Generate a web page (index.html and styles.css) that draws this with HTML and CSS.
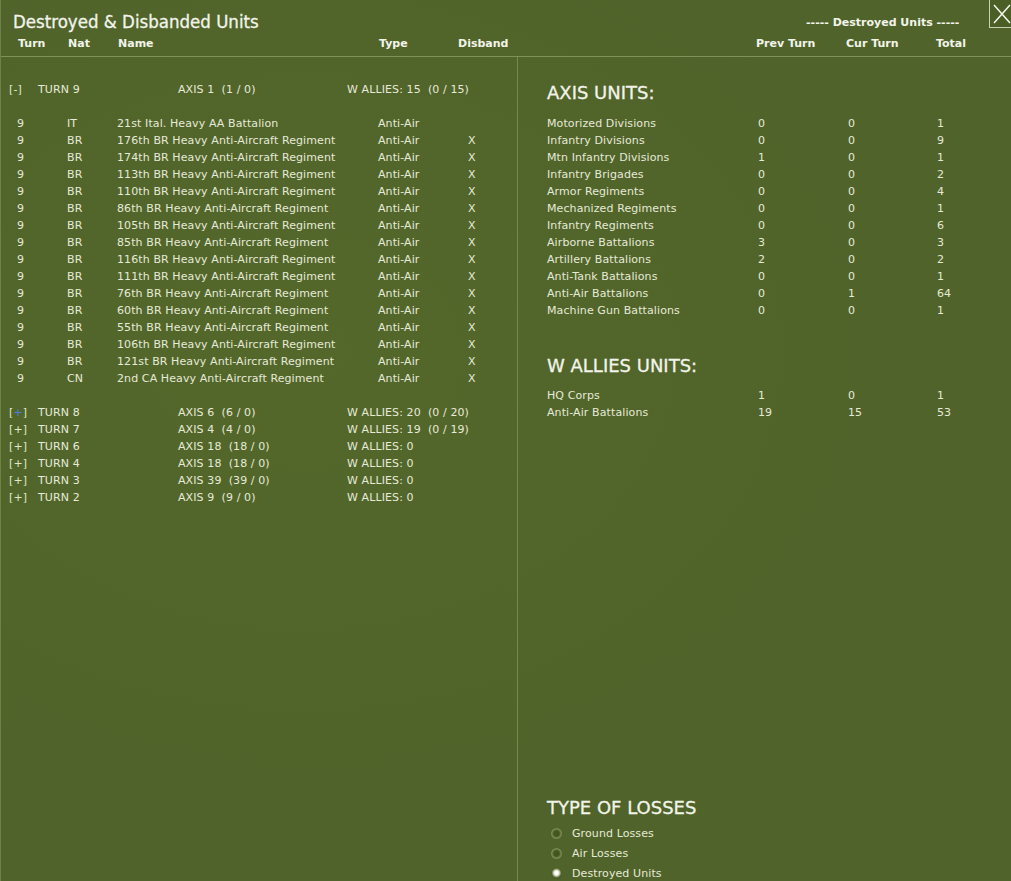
FILE: index.html
```html
<!DOCTYPE html>
<html lang="en">
<head>
    <meta charset="UTF-8">
    <title>Destroyed &amp; Disbanded Units</title>
    <link rel="stylesheet" href="styles.css">
</head>
<body>
    <div class="window">
        <!-- Title bar with column captions -->
        <div class="header">
            <div class="header-left">
                <h1 class="title">Destroyed &amp; Disbanded Units</h1>
                <div class="unit-row col-heads">
                    <span>Turn</span><span>Nat</span><span>Name</span><span class="head-type">Type</span><span class="head-disband">Disband</span>
                </div>
            </div>
            <div class="header-right">
                <div class="caption">----- Destroyed Units -----</div>
                <div class="stat-row col-heads">
                    <span></span><span>Prev Turn</span><span>Cur Turn</span><span>Total</span>
                </div>
            </div>
            <button class="close-btn" title="Close">
                <svg width="18" height="20" viewBox="0 0 18 20"><path d="M1 1 L17 19 M17 1 L1 19" stroke="#f4f6ee" stroke-width="1.5" fill="none"/></svg>
            </button>
        </div>

        <div class="content">
            <!-- Unit list by turn -->
            <div class="list-panel">
                <div class="turn-row">
                    <span class="toggle">[-]</span><span>TURN 9</span><span>AXIS 1&nbsp; (1 / 0)</span><span>W ALLIES: 15&nbsp; (0 / 15)</span>
                </div>
                <div class="units" id="units"></div>
                <div class="turns">
                    <div class="turn-row"><span class="toggle">[<b class="focus">+</b>]</span><span>TURN 8</span><span>AXIS 6&nbsp; (6 / 0)</span><span>W ALLIES: 20&nbsp; (0 / 20)</span></div>
                    <div class="turn-row"><span class="toggle">[+]</span><span>TURN 7</span><span>AXIS 4&nbsp; (4 / 0)</span><span>W ALLIES: 19&nbsp; (0 / 19)</span></div>
                    <div class="turn-row"><span class="toggle">[+]</span><span>TURN 6</span><span>AXIS 18&nbsp; (18 / 0)</span><span>W ALLIES: 0</span></div>
                    <div class="turn-row"><span class="toggle">[+]</span><span>TURN 4</span><span>AXIS 18&nbsp; (18 / 0)</span><span>W ALLIES: 0</span></div>
                    <div class="turn-row"><span class="toggle">[+]</span><span>TURN 3</span><span>AXIS 39&nbsp; (39 / 0)</span><span>W ALLIES: 0</span></div>
                    <div class="turn-row"><span class="toggle">[+]</span><span>TURN 2</span><span>AXIS 9&nbsp; (9 / 0)</span><span>W ALLIES: 0</span></div>
                </div>
            </div>

            <!-- Summary by unit class -->
            <div class="summary-panel">
                <h2 class="side-title">AXIS UNITS:</h2>
                <div id="axisStats"></div>
                <h2 class="side-title allies-title">W ALLIES UNITS:</h2>
                <div id="alliesStats"></div>

                <div class="losses">
                    <h2 class="side-title">TYPE OF LOSSES</h2>
                    <label class="radio"><span class="dot"></span>Ground Losses</label>
                    <label class="radio"><span class="dot"></span>Air Losses</label>
                    <label class="radio"><span class="dot checked"></span>Destroyed Units</label>
                </div>
            </div>
        </div>
    </div>

    <script>
        var units = [
            ['9', 'IT', '21st Ital. Heavy AA Battalion', 'Anti-Air', ''],
            ['9', 'BR', '176th BR Heavy Anti-Aircraft Regiment', 'Anti-Air', 'X'],
            ['9', 'BR', '174th BR Heavy Anti-Aircraft Regiment', 'Anti-Air', 'X'],
            ['9', 'BR', '113th BR Heavy Anti-Aircraft Regiment', 'Anti-Air', 'X'],
            ['9', 'BR', '110th BR Heavy Anti-Aircraft Regiment', 'Anti-Air', 'X'],
            ['9', 'BR', '86th BR Heavy Anti-Aircraft Regiment', 'Anti-Air', 'X'],
            ['9', 'BR', '105th BR Heavy Anti-Aircraft Regiment', 'Anti-Air', 'X'],
            ['9', 'BR', '85th BR Heavy Anti-Aircraft Regiment', 'Anti-Air', 'X'],
            ['9', 'BR', '116th BR Heavy Anti-Aircraft Regiment', 'Anti-Air', 'X'],
            ['9', 'BR', '111th BR Heavy Anti-Aircraft Regiment', 'Anti-Air', 'X'],
            ['9', 'BR', '76th BR Heavy Anti-Aircraft Regiment', 'Anti-Air', 'X'],
            ['9', 'BR', '60th BR Heavy Anti-Aircraft Regiment', 'Anti-Air', 'X'],
            ['9', 'BR', '55th BR Heavy Anti-Aircraft Regiment', 'Anti-Air', 'X'],
            ['9', 'BR', '106th BR Heavy Anti-Aircraft Regiment', 'Anti-Air', 'X'],
            ['9', 'BR', '121st BR Heavy Anti-Aircraft Regiment', 'Anti-Air', 'X'],
            ['9', 'CN', '2nd CA Heavy Anti-Aircraft Regiment', 'Anti-Air', 'X']
        ];

        var axisStats = [
            ['Motorized Divisions', 0, 0, 1],
            ['Infantry Divisions', 0, 0, 9],
            ['Mtn Infantry Divisions', 1, 0, 1],
            ['Infantry Brigades', 0, 0, 2],
            ['Armor Regiments', 0, 0, 4],
            ['Mechanized Regiments', 0, 0, 1],
            ['Infantry Regiments', 0, 0, 6],
            ['Airborne Battalions', 3, 0, 3],
            ['Artillery Battalions', 2, 0, 2],
            ['Anti-Tank Battalions', 0, 0, 1],
            ['Anti-Air Battalions', 0, 1, 64],
            ['Machine Gun Battalions', 0, 0, 1]
        ];

        var alliesStats = [
            ['HQ Corps', 1, 0, 1],
            ['Anti-Air Battalions', 19, 15, 53]
        ];

        // Fill a container with rows of plain cells
        function fillRows(id, rows, rowClass) {
            var box = document.getElementById(id);
            rows.forEach(function(cells) {
                var row = document.createElement('div');
                row.className = rowClass;
                cells.forEach(function(text) {
                    var cell = document.createElement('span');
                    cell.textContent = text;
                    row.appendChild(cell);
                });
                box.appendChild(row);
            });
        }

        fillRows('units', units, 'unit-row');
        fillRows('axisStats', axisStats, 'stat-row');
        fillRows('alliesStats', alliesStats, 'stat-row');
    </script>
</body>
</html>
```

FILE: styles.css
```css
body {
    margin: 0;
    padding: 0;
    overflow: hidden;
    background-color: #50632a;
    font-family: "DejaVu Sans", Tahoma, sans-serif;
    font-size: 11px;
    letter-spacing: 0.1px;
    color: #e6ead8;
}
.window {
    height: 881px;
    display: flex;
    flex-direction: column;
    background-color: #50632a;
    background-image: radial-gradient(ellipse at 30% 40%, rgba(90, 112, 45, 0.35), rgba(0, 0, 0, 0) 60%);
    border-left: 1px solid #6f8245;
}
.header {
    height: 57px;
    display: flex;
    position: relative;
    border-bottom: 1px solid #7f9058;
    box-sizing: border-box;
}
.header-left {
    width: 516px;
}
.header-right {
    flex: 1;
}
.title {
    margin: 0;
    padding: 11px 0 0 12px;
    height: 24px;
    font-size: 18.5px;
    font-weight: normal;
    letter-spacing: 0;
    line-height: 22px;
    color: #f2f4ea;
    font-stretch: condensed;
    -webkit-text-stroke: 0.3px #f2f4ea;
}
.caption {
    height: 35px;
    padding: 16px 0 0 289px;
    box-sizing: border-box;
    font-weight: bold;
    font-size: 11px;
    line-height: 14px;
    letter-spacing: 0;
    color: #f2f4ea;
}
.col-heads {
    font-weight: bold;
    letter-spacing: 0;
    color: #f2f4ea;
}
.header-left .col-heads {
    padding-left: 17px;
}
.head-disband {
    margin-left: -11px;
}
.close-btn {
    position: absolute;
    top: 0;
    right: -4px;
    width: 26px;
    height: 28px;
    padding: 3px 0 0 3px;
    background: #4b5e26;
    border: 1px solid #c9d2b2;
    border-top: none;
    text-align: left;
    cursor: pointer;
}

.content {
    flex: 1;
    display: flex;
}
.list-panel {
    width: 516px;
    border-right: 1px solid #76894c;
    padding-top: 24px;
}
.summary-panel {
    flex: 1;
    display: flex;
    flex-direction: column;
    padding-left: 29px;
}

/* left list */
.unit-row {
    display: grid;
    grid-template-columns: 50px 50px 261px 90px auto;
    height: 17px;
    line-height: 17px;
    white-space: nowrap;
}
.units {
    margin: 17px 0 17px;
    padding-left: 16px;
}
.turn-row {
    display: grid;
    grid-template-columns: 29px 140px 169px auto;
    height: 17px;
    line-height: 17px;
    padding-left: 8px;
    white-space: nowrap;
}
.toggle {
    color: #dfe9c6;
}
.focus {
    font-weight: normal;
    color: #4a7fe0;
}

/* right summary */
.stat-row {
    display: grid;
    grid-template-columns: 211px 90px 89px auto;
    height: 17px;
    line-height: 17px;
    white-space: nowrap;
}
.header-right .stat-row {
    grid-template-columns: 239px 90px 90px auto;
}
.side-title {
    margin: 0;
    font-size: 18px;
    font-weight: normal;
    letter-spacing: 0;
    line-height: 22px;
    height: 22px;
    color: #f2f4ea;
    -webkit-text-stroke: 0.3px #f2f4ea;
}
.summary-panel > .side-title:first-child {
    margin-top: 25px;
    margin-bottom: 11px;
}
.allies-title {
    margin-top: 36px;
    margin-bottom: 10px;
}
.losses {
    margin-top: auto;
    margin-bottom: -2px;
}
.losses .side-title {
    margin-bottom: 4px;
}
.radio {
    display: flex;
    align-items: center;
    height: 20px;
    padding-left: 4px;
}
.dot {
    width: 11px;
    height: 11px;
    margin-right: 10px;
    border-radius: 50%;
    background: radial-gradient(circle at 50% 50%, #43561f 35%, #7d8e55 62%, #3c4c1c 100%);
}
.dot.checked {
    background: radial-gradient(circle at 50% 45%, #ffffff 22%, #b8c09e 40%, #4d6028 60%, #3c4c1c 100%);
}
```
